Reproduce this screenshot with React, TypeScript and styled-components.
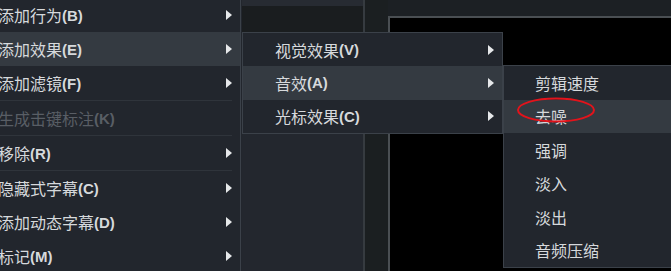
import React from "react";
import styled, { createGlobalStyle } from "styled-components";

const GlobalStyle = createGlobalStyle`
  html, body {
    margin: 0;
    padding: 0;
    background: #1c2024;
    overflow: hidden;
  }
`;

const Stage = styled.div`
  position: relative;
  width: 671px;
  height: 271px;
  display: flex;
  overflow: hidden;
  background: #1c2024;
  font-family: "Noto Sans CJK SC", "Liberation Sans", sans-serif;
`;

const LeftPane = styled.div`
  width: 242px;
  background: #22262d;
`;

const SidePanel = styled.div`
  width: 121px;
  display: flex;
  flex-direction: column;
`;

const PanelTopStrip = styled.div`
  height: 6px;
  background: #272b32;
`;

const PanelHeader = styled.div`
  height: 27px;
  background: #1a1d1f;
`;

const PanelBody = styled.div`
  flex: 1;
  background: #23272e;
`;

const Divider = styled.div`
  width: 2px;
  background: #363b40;
`;

const Gutter = styled.div`
  width: 23px;
  background: #1b1f21;
`;

const PreviewArea = styled.div`
  flex: 1;
  padding-top: 16px;
  display: flex;
`;

const PreviewScreen = styled.div`
  flex: 1;
  background: #000;
  border-top: 2px solid #4a4f53;
  border-left: 2px solid #4a4f53;
`;

// floating context menus
const Menu = styled.div<{ $left: number; $top: number; $width: number; $pad: number }>`
  position: absolute;
  left: ${(p) => p.$left}px;
  top: ${(p) => p.$top}px;
  width: ${(p) => p.$width}px;
  box-sizing: border-box;
  background: #22262d;
  border: 1px solid #3b4149;
  display: flex;
  flex-direction: column;
  --pad: ${(p) => p.$pad}px;
`;

const Item = styled.div<{ $active?: boolean; $disabled?: boolean; $h: number }>`
  height: ${(p) => p.$h}px;
  display: flex;
  align-items: center;
  padding-left: var(--pad);
  padding-right: 8px;
  background: ${(p) => (p.$active ? "#343a41" : "transparent")};
  color: ${(p) => (p.$disabled ? "#595e65" : "#d6d9dc")};
  font-size: 16px;
  white-space: nowrap;
`;

const Hotkey = styled.span`
  font-family: "Liberation Sans", Arial, sans-serif;
  font-weight: bold;
  font-size: 15px;
`;

const Arrow = styled.span`
  margin-left: auto;
  width: 0;
  height: 0;
  border-top: 5px solid transparent;
  border-bottom: 5px solid transparent;
  border-left: 6px solid #e6e8ea;
`;

const Separator = styled.div`
  height: 1px;
  margin: 0 8px 0 20px;
  background: #2f343b;
`;

const Circle = styled.svg`
  position: absolute;
  left: 516px;
  top: 96px;
  overflow: visible;
`;

type Entry = { label: string; key?: string; sub?: boolean; active?: boolean; disabled?: boolean } | "sep";

const mainMenu: Entry[] = [
  { label: "添加行为", key: "(B)", sub: true },
  { label: "添加效果", key: "(E)", sub: true, active: true },
  { label: "添加滤镜", key: "(F)", sub: true },
  "sep",
  { label: "生成击键标注", key: "(K)", disabled: true },
  "sep",
  { label: "移除", key: "(R)", sub: true },
  "sep",
  { label: "隐藏式字幕", key: "(C)", sub: true },
  { label: "添加动态字幕", key: "(D)", sub: true },
  { label: "标记", key: "(M)", sub: true },
];

const effectMenu: Entry[] = [
  { label: "视觉效果", key: "(V)", sub: true },
  { label: "音效", key: "(A)", sub: true, active: true },
  { label: "光标效果", key: "(C)", sub: true },
];

const audioMenu: Entry[] = [
  { label: "剪辑速度" },
  { label: "去噪", active: true },
  { label: "强调" },
  { label: "淡入" },
  { label: "淡出" },
  { label: "音频压缩" },
];

const renderItems = (items: Entry[], h: number) =>
  items.map((it, i) =>
    it === "sep" ? (
      <Separator key={i} />
    ) : (
      <Item key={i} $h={h} $active={it.active} $disabled={it.disabled}>
        {it.label}
        {it.key && <Hotkey>{it.key}</Hotkey>}
        {it.sub && <Arrow />}
      </Item>
    )
  );

export default function App() {
  return (
    <>
      <GlobalStyle />
      <Stage>
        <LeftPane />
        <SidePanel>
          <PanelTopStrip />
          <PanelHeader />
          <PanelBody />
        </SidePanel>
        <Divider />
        <Gutter />
        <PreviewArea>
          <PreviewScreen />
        </PreviewArea>

        <Menu $left={-35} $top={-3} $width={276} $pad={32}>
          {renderItems(mainMenu, 34)}
        </Menu>
        <Menu $left={242} $top={32} $width={261} $pad={32}>
          {renderItems(effectMenu, 33.3)}
        </Menu>
        <Menu $left={503} $top={65} $width={200} $pad={31}>
          {renderItems(audioMenu, 33.5)}
        </Menu>

        <Circle width="80" height="28" viewBox="0 0 80 28">
          <ellipse cx="40" cy="14" rx="38" ry="11.5" fill="none" stroke="#e3131b" strokeWidth="2" />
        </Circle>
      </Stage>
    </>
  );
}
